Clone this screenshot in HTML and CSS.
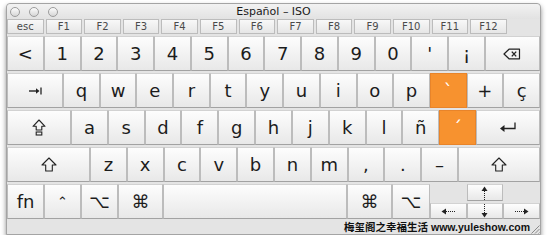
FILE: index.html
```html
<!DOCTYPE html>
<html lang="es">
<head>
    <meta charset="UTF-8">
    <meta name="viewport" content="width=device-width, initial-scale=1.0">
    <title>Visor de teclado</title>
    <link rel="stylesheet" href="styles.css">
</head>
<body>
    <main class="window">
        <header class="titlebar">
            <div class="lights"><span></span><span></span><span></span></div>
            <div class="title">Español – ISO</div>
            <div></div>
        </header>

        <div class="frow">
            <div class="fkey">esc</div>
            <div class="fkey">F1</div>
            <div class="fkey">F2</div>
            <div class="fkey">F3</div>
            <div class="fkey">F4</div>
            <div class="fkey">F5</div>
            <div class="fkey">F6</div>
            <div class="fkey">F7</div>
            <div class="fkey">F8</div>
            <div class="fkey">F9</div>
            <div class="fkey">F10</div>
            <div class="fkey">F11</div>
            <div class="fkey">F12</div>
        </div>

        <div class="row">
            <div class="key">&lt;</div>
            <div class="key">1</div>
            <div class="key">2</div>
            <div class="key">3</div>
            <div class="key">4</div>
            <div class="key">5</div>
            <div class="key">6</div>
            <div class="key">7</div>
            <div class="key">8</div>
            <div class="key">9</div>
            <div class="key">0</div>
            <div class="key">'</div>
            <div class="key">¡</div>
            <div class="key delete">
                <svg width="18" height="12" viewBox="0 0 18 12"><path d="M1 6 L6 1.2 H16.5 V10.8 H6 Z" fill="none" stroke="#222" stroke-width="1.2" stroke-linejoin="round"/><path d="M8.8 3.6 L13.2 8.4 M13.2 3.6 L8.8 8.4" stroke="#222" stroke-width="1.4"/></svg>
            </div>
        </div>

        <div class="row">
            <div class="key tab">
                <svg width="13" height="8" viewBox="0 0 13 8"><path d="M0 4 H8" stroke="#222" stroke-width="1.4"/><path d="M10.5 4 L7 1.3 V6.7 Z" fill="#222"/><path d="M12 0.5 V7.5" stroke="#222" stroke-width="1.3"/></svg>
            </div>
            <div class="key">q</div>
            <div class="key">w</div>
            <div class="key">e</div>
            <div class="key">r</div>
            <div class="key">t</div>
            <div class="key">y</div>
            <div class="key">u</div>
            <div class="key">i</div>
            <div class="key">o</div>
            <div class="key">p</div>
            <div class="key dead">`</div>
            <div class="key">+</div>
            <div class="key">ç</div>
        </div>

        <div class="row">
            <div class="key caps">
                <svg width="14" height="17" viewBox="0 0 14 17"><path d="M7 1 L13 7.3 H9.8 V11 H4.2 V7.3 H1 Z" fill="none" stroke="#222" stroke-width="1.1" stroke-linejoin="round"/><rect x="4.2" y="13" width="5.6" height="3" fill="none" stroke="#222" stroke-width="1.1"/></svg>
            </div>
            <div class="key">a</div>
            <div class="key">s</div>
            <div class="key">d</div>
            <div class="key">f</div>
            <div class="key">g</div>
            <div class="key">h</div>
            <div class="key">j</div>
            <div class="key">k</div>
            <div class="key">l</div>
            <div class="key">ñ</div>
            <div class="key dead">´</div>
            <div class="key return">
                <svg width="18" height="11" viewBox="0 0 18 11"><path d="M16 0.5 V6.5 H5" fill="none" stroke="#222" stroke-width="1.3"/><path d="M1 6.5 L5.5 3 V10 Z" fill="#222"/></svg>
            </div>
        </div>

        <div class="row">
            <div class="key lshift">
                <svg width="16" height="15" viewBox="0 0 16 15"><path d="M8 1 L15 8 H11.3 V14 H4.7 V8 H1 Z" fill="none" stroke="#222" stroke-width="1.1" stroke-linejoin="round"/></svg>
            </div>
            <div class="key">z</div>
            <div class="key">x</div>
            <div class="key">c</div>
            <div class="key">v</div>
            <div class="key">b</div>
            <div class="key">n</div>
            <div class="key">m</div>
            <div class="key">,</div>
            <div class="key">.</div>
            <div class="key">–</div>
            <div class="key rshift">
                <svg width="16" height="15" viewBox="0 0 16 15"><path d="M8 1 L15 8 H11.3 V14 H4.7 V8 H1 Z" fill="none" stroke="#222" stroke-width="1.1" stroke-linejoin="round"/></svg>
            </div>
        </div>

        <div class="row">
            <div class="key mod">fn</div>
            <div class="key mod small">⌃</div>
            <div class="key mod">⌥</div>
            <div class="key cmd">⌘</div>
            <div class="key space"></div>
            <div class="key cmd">⌘</div>
            <div class="key opt">⌥</div>
            <div class="arrows">
                <div class="key akey up">
                    <svg width="7" height="14" viewBox="0 0 7 14"><path d="M3.5 0.5 L6.5 5 H0.5 Z" fill="#222"/><path d="M3.5 5 V14" stroke="#222" stroke-dasharray="1 1"/></svg>
                </div>
                <div class="key akey left">
                    <svg width="14" height="7" viewBox="0 0 14 7"><path d="M0.5 3.5 L5 0.5 V6.5 Z" fill="#222"/><path d="M5 3.5 H14" stroke="#222" stroke-dasharray="1 1"/></svg>
                </div>
                <div class="key akey down">
                    <svg width="7" height="14" viewBox="0 0 7 14"><path d="M3.5 0 V9" stroke="#222" stroke-dasharray="1 1"/><path d="M3.5 13.5 L6.5 9 H0.5 Z" fill="#222"/></svg>
                </div>
                <div class="key akey right">
                    <svg width="14" height="7" viewBox="0 0 14 7"><path d="M0 3.5 H9" stroke="#222" stroke-dasharray="1 1"/><path d="M13.5 3.5 L9 0.5 V6.5 Z" fill="#222"/></svg>
                </div>
            </div>
        </div>

        <footer class="status">
            <span class="credit">梅玺阁之幸福生活 www.yuleshow.com</span>
            <svg class="grip" width="9" height="9" viewBox="0 0 9 9"><path d="M8.5 0.5 L0.5 8.5 M8.5 4 L4 8.5 M8.5 7.5 L7.5 8.5" stroke="#8a8a8a" stroke-width="1"/></svg>
        </footer>
    </main>
</body>
</html>
```

FILE: styles.css
```css
body {
    margin: 0;
    background: #fff;
    font-family: "DejaVu Sans", sans-serif;
    color: #1c1c1c;
}

.window {
    box-sizing: border-box;
    width: 535px;
    margin: 3px 0 0 6px;
    border: 1px solid #a4a4a4;
    border-radius: 4px 4px 0 0;
    background: #e4e4e4;
    box-shadow: 0 3px 5px rgba(0, 0, 0, 0.45);
}

.titlebar {
    display: grid;
    grid-template-columns: 1fr auto 1fr;
    align-items: center;
    height: 15px;
    background: linear-gradient(#f2f2f2, #e2e2e2);
    border-radius: 4px 4px 0 0;
}

.lights {
    display: flex;
    gap: 9px;
    padding-left: 3px;
}

.lights span {
    box-sizing: border-box;
    width: 10px;
    height: 10px;
    border-radius: 50%;
    border: 1px solid #9c9c9c;
    background: linear-gradient(#fcfcfc, #d6d6d6);
}

.title {
    font-size: 11px;
    color: #1a1a1a;
}

.frow {
    display: flex;
    gap: 2px;
    height: 15px;
}

.fkey {
    box-sizing: border-box;
    width: 36.6px;
    border: 1px solid #bcbcbc;
    background: linear-gradient(#f8f8f8, #e6e6e6);
    font-size: 10px;
    line-height: 13px;
    text-align: center;
    color: #4a4a4a;
}

.row {
    display: flex;
    height: 35px;
    margin-top: 2px;
}

.key {
    box-sizing: border-box;
    flex: 1 1 0;
    display: flex;
    align-items: center;
    justify-content: center;
    border: 1px solid #bcbcbc;
    border-top-color: #d2d2d2;
    border-bottom-color: #a2a2a2;
    background: linear-gradient(#fdfdfd, #e8e8e8);
    font-size: 18px;
}

.dead {
    background: #f7922f;
    border-color: #e8842a;
    color: #fff;
}

.delete { flex: 0 0 55px; }
.tab { flex: 0 0 56px; }
.caps { flex: 0 0 64px; }
.return { flex: 0 0 64px; }
.lshift { flex: 0 0 83px; }
.rshift { flex: 0 0 82px; }
.mod { flex: 0 0 37px; }
.cmd { flex: 0 0 45px; }
.opt { flex: 0 0 38px; }
.space { flex: 0 0 184px; }

.small {
    font-size: 13px;
}

.arrows {
    flex: 0 0 110px;
    display: grid;
    grid-template-columns: repeat(3, 1fr);
    grid-template-rows: 17px 16px;
    gap: 2px 0;
}

.akey {
    font-size: 10px;
}

.up { grid-column: 2; grid-row: 1; }
.left { grid-column: 1; grid-row: 2; }
.down { grid-column: 2; grid-row: 2; }
.right { grid-column: 3; grid-row: 2; }

.status {
    display: flex;
    justify-content: flex-end;
    align-items: center;
    height: 15px;
}

.credit {
    font-family: "Liberation Sans", "Noto Sans CJK SC", sans-serif;
    font-weight: bold;
    font-size: 10.5px;
    color: #111;
}

.grip {
    margin: 3px 0 0 1px;
    align-self: flex-end;
}
```
